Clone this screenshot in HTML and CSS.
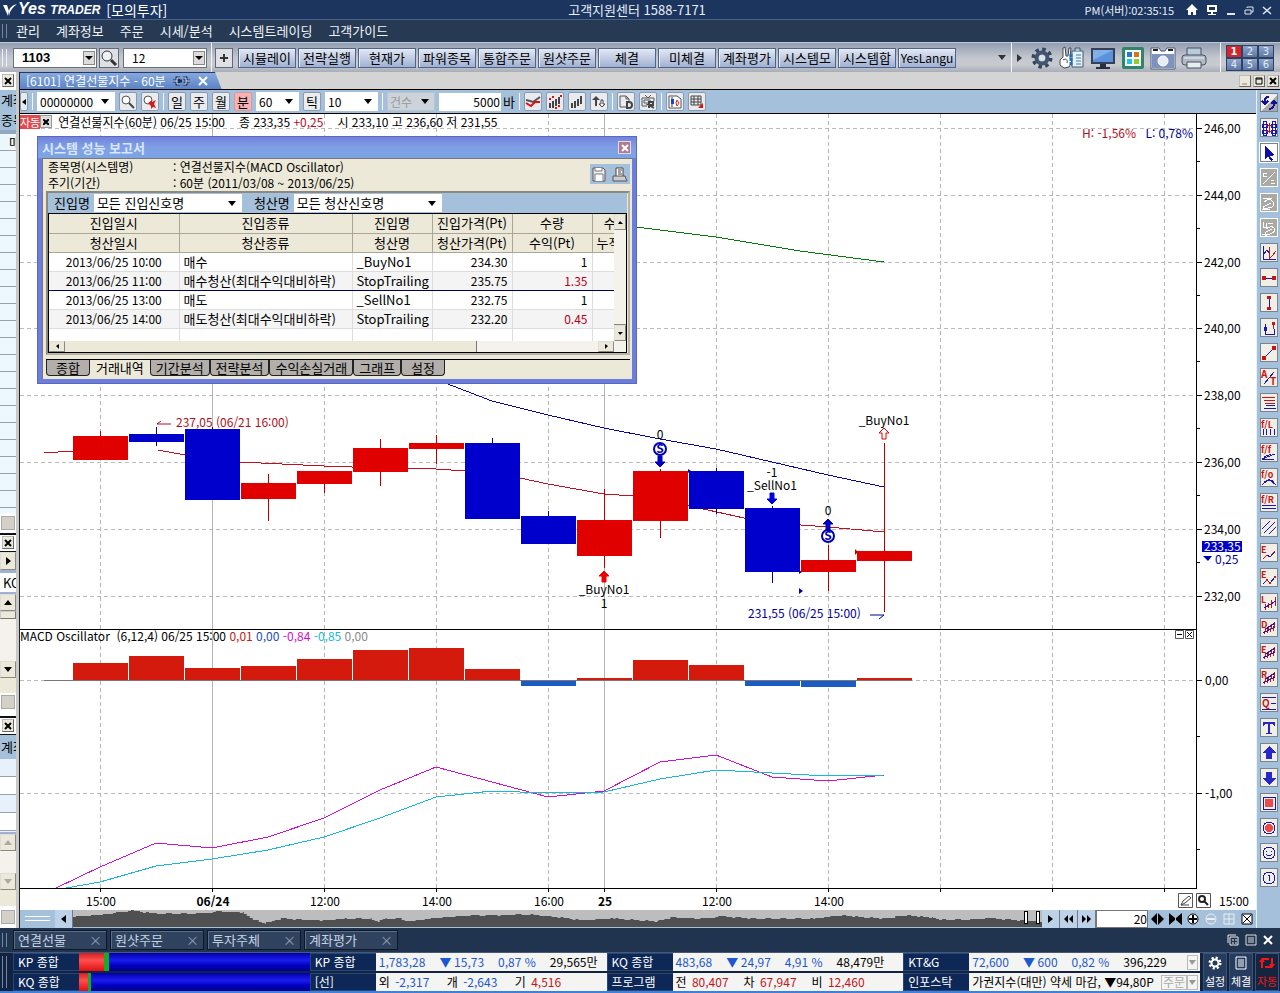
FILE: index.html
```
<!DOCTYPE html>
<html lang="ko">
<head>
    <meta charset="UTF-8">
    <meta name="viewport" content="width=device-width, initial-scale=1.0">
    <title>Yes TRADER [모의투자]</title>
    <link rel="stylesheet" href="styles.css">
</head>
<body>
    <!-- Title bar -->
    <header class="title-bar">
        <div class="brand">
            <svg class="brand-mark" width="16" height="16" viewBox="0 0 16 16"><path d="M1 3l4 0 2 6-1 5zM7 9C8 5 11 3 15 2 10 6 8 9 7 14z" fill="#fff"/></svg>
            <span class="logo">Yes <small>TRADER</small></span>
            <span class="mode">[모의투자]</span>
        </div>
        <span class="center">고객지원센터 1588-7171</span>
        <div class="sys">
            <span class="clock">PM(서버):02:35:15</span>
            <button aria-label="홈"><svg width="12" height="12" viewBox="0 0 12 12"><path d="M6 0l6 6h-2v5H7V8H5v3H2V6H0z" fill="#fff"/></svg></button>
            <button aria-label="화면"><svg width="12" height="12" viewBox="0 0 12 12"><path d="M1 1h10v7H1zM3 3v3h6V3zM5 8h2v2h3v1H2v-1h3z" fill="#fff" fill-rule="evenodd"/></svg></button>
            <button aria-label="최소화"><svg width="10" height="12" viewBox="0 0 10 12"><path d="M1 9h8v2H1z" fill="#dfe8f4"/></svg></button>
            <button aria-label="복원"><svg width="10" height="12" viewBox="0 0 10 12"><path d="M3 4V3h6v5H7M1 6h6v4H1z" fill="none" stroke="#dfe8f4"/></svg></button>
            <button aria-label="닫기"><svg width="10" height="12" viewBox="0 0 10 12"><path d="M1 3l8 7M9 3l-8 7" stroke="#dfe8f4" stroke-width="1.5"/></svg></button>
        </div>
    </header>

    <nav class="menu-bar">
        <i class="grip"></i>
        <a href="#">관리</a>
        <a href="#">계좌정보</a>
        <a href="#">주문</a>
        <a href="#">시세/분석</a>
        <a href="#">시스템트레이딩</a>
        <a href="#">고객가이드</a>
    </nav>

    <!-- Main toolbar -->
    <div class="toolbar">
        <i class="grip"></i>
        <select class="screen-no" aria-label="화면번호"><option>1103</option></select>
        <button class="square" aria-label="검색"><svg width="18" height="18" viewBox="0 0 18 18"><circle cx="7" cy="7" r="5" fill="#eef2f6" stroke="#333"/><path d="M11 11l5 5" stroke="#333" stroke-width="3"/></svg></button>
        <select class="screen-set" aria-label="화면세트"><option>12</option></select>
        <i class="split"></i>
        <button class="square plus" aria-label="추가"><svg width="10" height="10" viewBox="0 0 10 10"><path d="M5 1v8M1 5h8" stroke="#333" stroke-width="2"/></svg></button>
        <div class="quick">
            <button>시뮬레이</button>
            <button>전략실행</button>
            <button>현재가</button>
            <button>파워종목</button>
            <button>통합주문</button>
            <button>원샷주문</button>
            <button>체결</button>
            <button>미체결</button>
            <button>계좌평가</button>
            <button>시스템모</button>
            <button>시스템합</button>
            <button>YesLangu</button>
        </div>
        <div class="tools">
            <svg width="8" height="5" viewBox="0 0 8 5"><path d="M0 0h8L4 5z" fill="#333"/></svg>
            <i class="split"></i>
            <svg class="more" width="5" height="8" viewBox="0 0 5 8"><path d="M0 0l5 4-5 4z" fill="#333"/></svg>
            <button aria-label="설정"><svg width="24" height="24" viewBox="0 0 24 24"><circle cx="12" cy="12" r="8.5" fill="none" stroke="#34455e" stroke-width="4" stroke-dasharray="3.4 3.27"/><circle cx="12" cy="12" r="5.5" fill="#b9c4d2" stroke="#42546e" stroke-width="4"/><circle cx="12" cy="12" r="3" fill="#dde2ea"/></svg></button>
            <button aria-label="주문장"><svg width="26" height="24" viewBox="0 0 26 24"><path d="M4 2l2-1 1 9h2l1-8 2 0-1 10 2 4-3 5-5 1-4-3 0-5 3-3z" fill="#fff" stroke="#445"/><path d="M4 14c3-2 5 0 4 3" fill="none" stroke="#445"/><path d="M13 5h11v16H13z" fill="#e6f2fa" stroke="#3d5878"/><path d="M17 9h5M17 12h5M17 15h5M17 18h5" stroke="#4978a8"/><path d="M16 5V2h5v3" fill="#a8c6e0" stroke="#3d5878"/><path d="M12 8v12" stroke="#1674c6" stroke-width="3" stroke-dasharray="3 1"/></svg></button>
            <button aria-label="모니터"><svg width="26" height="24" viewBox="0 0 26 24"><path d="M1 2h24v16H1z" fill="#334058"/><path d="M3 4h20v12H3z" fill="#5c91dc"/><path d="M3 4h20L3 14z" fill="#83afe9"/><path d="M10 18h6v3h4v2H6v-2h4z" fill="#28303f"/></svg></button>
            <button aria-label="창배열"><svg width="24" height="24" viewBox="0 0 24 24"><rect x="1" y="1" width="22" height="22" rx="2" fill="#328469"/><path d="M4 4h16v16H4z" fill="#f4fff9"/><path d="M6 6h5v5H6z" fill="#2b75d0"/><path d="M13 6h5v5h-5z" fill="#df7018"/><path d="M6 13h5v5H6z" fill="#25c4da"/><path d="M13 13h5v5h-5z" fill="#95c92c"/></svg></button>
            <button aria-label="화면캡처"><svg width="26" height="24" viewBox="0 0 26 24"><path d="M1 2h8l2 3h4l2-3h8v21H1z" fill="#fff" stroke="#485a77"/><path d="M3 4h5M18 4h5" stroke="#222" stroke-width="2"/><path d="M2 8h22v14H2z" fill="#7f92bd"/><circle cx="13" cy="15" r="5" fill="#e7edf8" stroke="#fff"/></svg></button>
            <button aria-label="인쇄"><svg width="26" height="24" viewBox="0 0 26 24"><path d="M6 2h14v8H6z" fill="#b8cbd8" stroke="#445064"/><rect x="1" y="9" width="24" height="10" rx="3" fill="#b4bac4" stroke="#445064"/><path d="M3 12h20" stroke="#eef"/><path d="M6 16h14v6H6z" fill="#e9edf2" stroke="#445064"/></svg></button>
            <i class="split last"></i>
            <div class="pages">
                <button class="on">1</button><button>2</button><button>3</button>
                <button>4</button><button>5</button><button>6</button>
            </div>
        </div>
    </div>

    <main class="workspace">
        <!-- Docked panels, collapsed to a sliver -->
        <aside class="dock">
            <div class="dock-head"><button aria-label="닫기"><svg width="8" height="8" viewBox="0 0 8 8"><path d="M1 1l6 6M7 1L1 7" stroke="#000" stroke-width="2"/></svg></button></div>
            <div class="dock-label">계좌</div>
            <div class="dock-label">종목</div>
            <div class="dock-rows tall"><span>매</span></div>
            <div class="dock-corner"><i></i></div>
            <div class="dock-head line"><button aria-label="닫기"><svg width="8" height="8" viewBox="0 0 8 8"><path d="M1 1l6 6M7 1L1 7" stroke="#000" stroke-width="2"/></svg></button></div>
            <button class="dock-step" aria-label="다음"><svg width="5" height="8" viewBox="0 0 5 8"><path d="M0 0l5 4-5 4z"/></svg></button>
            <div class="dock-field">KO</div>
            <div class="dock-scroll first"><button aria-label="위로"><svg width="8" height="5" viewBox="0 0 8 5"><path d="M0 5h8L4 0z"/></svg></button><i></i><button aria-label="아래로"><svg width="8" height="5" viewBox="0 0 8 5"><path d="M0 0h8L4 5z"/></svg></button></div>
            <div class="dock-corner second"><i></i></div>
            <div class="dock-head line"><button aria-label="닫기"><svg width="8" height="8" viewBox="0 0 8 8"><path d="M1 1l6 6M7 1L1 7" stroke="#000" stroke-width="2"/></svg></button></div>
            <div class="dock-label high">계좌</div>
            <div class="dock-rows short"></div>
            <div class="dock-scroll off"><button aria-label="위로"><svg width="8" height="5" viewBox="0 0 8 5"><path d="M0 5h8L4 0z" fill="#aaa"/></svg></button><button aria-label="아래로"><svg width="8" height="5" viewBox="0 0 8 5"><path d="M0 0h8L4 5z" fill="#aaa"/></svg></button></div>
            <div class="dock-corner last"><i></i></div>
        </aside>

        <section class="window">
            <div class="window-tabs">
                <div class="window-tab">
                    <span>[6101] 연결선물지수 - 60분</span>
                    <svg width="18" height="10" viewBox="0 0 18 10"><path d="M0 5h4M7 2H4v6h3M4 5h5M10 2h3v6h-3M13 5h4" fill="none" stroke="#17305e" stroke-width="3"/><path d="M0 5h4M7 2H4v6h3M10 2h3v6h-3M13 5h4" fill="none" stroke="#e2ebf8"/></svg>
                    <button aria-label="탭 닫기"><svg width="10" height="10" viewBox="0 0 10 10"><path d="M1 1l8 8M9 1L1 9" stroke="#fff" stroke-width="2"/></svg></button>
                </div>
                <div class="window-ctl">
                    <button aria-label="최소화"><svg width="8" height="8" viewBox="0 0 8 8"><path d="M1 7h5" stroke="#888"/></svg></button>
                    <button aria-label="최대화"><svg width="8" height="8" viewBox="0 0 8 8"><path d="M1 1h6v6H1zM1 2h6" fill="none" stroke="#000"/></svg></button>
                    <button aria-label="닫기"><svg width="8" height="8" viewBox="0 0 8 8"><path d="M1 1l6 6M7 1L1 7" stroke="#000" stroke-width="2"/></svg></button>
                </div>
            </div>

            <div class="window-body">
                <div class="chart-side">
                    <div class="chart-bar">
                        <button class="tiny" aria-label="이전"><svg width="4" height="6" viewBox="0 0 4 6"><path d="M4 0v6L0 3z"/></svg></button>
                        <i class="split"></i>
                        <select class="code" aria-label="종목코드"><option>00000000</option></select>
                        <button aria-label="종목검색"><svg width="14" height="14" viewBox="0 0 14 14"><circle cx="5" cy="5" r="4" fill="#fff" stroke="#555"/><path d="M8 8l5 5" stroke="#444" stroke-width="2"/></svg></button>
                        <button aria-label="검색취소"><svg width="14" height="14" viewBox="0 0 14 14"><circle cx="5" cy="5" r="4" fill="#fff" stroke="#555"/><path d="M5 8l4-3v2l4-2-2 4 2 4-3-1-2 2V11z" fill="#d51a1a"/></svg></button>
                        <i class="split"></i>
                        <button>일</button>
                        <button>주</button>
                        <button>월</button>
                        <button class="on">분</button>
                        <select class="minutes" aria-label="분"><option>60</option></select>
                        <button>틱</button>
                        <select class="ticks" aria-label="틱"><option>10</option></select>
                        <i class="split"></i>
                        <select class="count" aria-label="건수" disabled><option>건수</option></select>
                        <label class="bars"><input type="text" value="5000"> 바</label>
                        <i class="split"></i>
                        <button aria-label="지표"><svg width="16" height="14" viewBox="0 0 16 14"><path d="M1 5l4 1 3 1 7-5" fill="none" stroke="#555" stroke-width="2"/><path d="M1 8l5 3 4-4 5 0" fill="none" stroke="#d11" stroke-width="2"/></svg></button>
                        <button aria-label="신호"><svg width="14" height="14" viewBox="0 0 14 14"><path d="M2 8v5M5 6v7M8 4v7M11 2v7" stroke="#444" stroke-width="2"/><path d="M1 4h2M4 2h2M7 13h2M10 11h2M12 1h2" stroke="#d11" stroke-width="2"/></svg></button>
                        <button aria-label="봉차트"><svg width="14" height="14" viewBox="0 0 14 14"><path d="M2 8v5M5 6v7M8 4v7M11 1v8" stroke="#444" stroke-width="2"/></svg></button>
                        <button aria-label="정렬"><svg width="14" height="14" viewBox="0 0 14 14"><path d="M4 1l4 4H5v6H3V5H0z" fill="#444"/><path d="M10 12L7 9h2V5h2v4h2z" fill="#fff" stroke="#444"/></svg></button>
                        <i class="split"></i>
                        <button aria-label="데이터"><svg width="14" height="14" viewBox="0 0 14 14"><path d="M7 12H1V1h6l3 3v2M7 1v3h3" fill="none" stroke="#555"/><path d="M8 7h2q3 0 3 3t-3 3H8z" fill="none" stroke="#444" stroke-width="2"/></svg></button>
                        <button aria-label="리플레이"><svg width="14" height="14" viewBox="0 0 14 14"><path d="M4 0l3 3 3-3M6 11H1V3h12v3M3 5h6v3H3z" fill="none" stroke="#555"/><path d="M8 13V7h4v3H8l5 3" fill="none" stroke="#444" stroke-width="2"/></svg></button>
                        <i class="split"></i>
                        <button aria-label="차트저장"><svg width="14" height="14" viewBox="0 0 14 14"><path d="M1 1h8l4 3v9H1z" fill="#fff" stroke="#555"/><path d="M4 2v10" stroke="#333"/><path d="M3 4h3v5H3z" fill="#1745d8"/><path d="M9 5l2 3-2 3-1-3z" fill="#fff" stroke="#d22"/></svg></button>
                        <button aria-label="표"><svg width="14" height="14" viewBox="0 0 14 14"><path d="M1 1h10v9H1zM1 4h10M1 7h10M4 1v9M8 1v9" fill="none" stroke="#444"/><path d="M13 8v5H8z" fill="#d11"/></svg></button>
                    </div>

                    <div class="chart-area">
                        <div class="quote">
                            <b class="auto">자동</b><button aria-label="닫기"><svg width="6" height="6" viewBox="0 0 6 6"><path d="M0 0l6 6M6 0L0 6" stroke="#000" stroke-width="2"/></svg></button>
                            <span class="name">연결선물지수(60분) 06/25 15:00</span>
                            <span>종 233,35 <em>+0,25</em></span>
                            <span class="ohl">시 233,10 고 236,60 저 231,55</span>
                        </div>
                        <svg class="chart" id="chart" viewBox="20 114 1236 796" role="img" aria-label="연결선물지수 60분 차트"></svg>

                        <!-- System performance report -->
                        <div class="report">
                            <div class="report-title">
                                <h2>시스템 성능 보고서</h2>
                                <button aria-label="닫기"><svg width="8" height="8" viewBox="0 0 8 8"><path d="M1 1l6 6M7 1L1 7" stroke="#fff" stroke-width="2"/></svg></button>
                            </div>
                            <div class="report-body">
                                <div class="report-info">
                                    <dl>
                                        <dt>종목명(시스템명)</dt><dd>: 연결선물지수(MACD Oscillator)</dd>
                                        <dt>주기(기간)</dt><dd>: 60분 (2011/03/08 ~ 2013/06/25)</dd>
                                    </dl>
                                    <div class="report-tools">
                                        <button aria-label="저장"><svg width="14" height="15" viewBox="0 0 14 15"><path d="M1 1h10l2 2v11H1z" fill="#eee" stroke="#555"/><path d="M3 1v3h7V1M3 14V7h8v7" fill="#fff" stroke="#777"/></svg></button>
                                        <button aria-label="인쇄"><svg width="16" height="15" viewBox="0 0 16 15"><path d="M4 9V1h7v8" fill="#fff" stroke="#444"/><path d="M6 3h4M6 5h3M6 7h4" stroke="#444"/><path d="M1 9h12l2 5H1z" fill="#ccc" stroke="#555"/></svg></button>
                                    </div>
                                </div>
                                <div class="report-panel">
                                    <div class="filters">
                                        <label for="entry">진입명</label>
                                        <select id="entry"><option>모든 진입신호명</option></select>
                                        <label for="exit">청산명</label>
                                        <select id="exit"><option>모든 청산신호명</option></select>
                                    </div>
                                    <div class="trades">
                                        <div class="trades-view">
                                            <table>
                                                <colgroup><col class="c-date"><col class="c-kind"><col class="c-num"><col class="c-num"><col class="c-num"><col class="c-num"></colgroup>
                                                <thead>
                                                    <tr><th>진입일시</th><th>진입종류</th><th>진입명</th><th>진입가격(Pt)</th><th>수량</th><th class="cut">&nbsp; 수</th></tr>
                                                    <tr><th>청산일시</th><th>청산종류</th><th>청산명</th><th>청산가격(Pt)</th><th>수익(Pt)</th><th class="cut">누적</th></tr>
                                                </thead>
                                                <tbody>
                                                    <tr><td>2013/06/25 10:00</td><td>매수</td><td>_BuyNo1</td><td>234.30</td><td>1</td><td></td></tr>
                                                    <tr class="exit"><td>2013/06/25 11:00</td><td>매수청산(최대수익대비하락)</td><td>StopTrailing</td><td>235.75</td><td class="gain">1.35</td><td></td></tr>
                                                    <tr><td>2013/06/25 13:00</td><td>매도</td><td>_SellNo1</td><td>232.75</td><td>1</td><td></td></tr>
                                                    <tr class="exit"><td>2013/06/25 14:00</td><td>매도청산(최대수익대비하락)</td><td>StopTrailing</td><td>232.20</td><td class="gain">0.45</td><td></td></tr>
                                                    <tr><td></td><td></td><td></td><td></td><td></td><td></td></tr>
                                                </tbody>
                                            </table>
                                        </div>
                                        <div class="v-scroll"><button aria-label="위로"><svg width="5" height="3" viewBox="0 0 5 3"><path d="M0 3h5L2 0z"/></svg></button><i></i><button aria-label="아래로"><svg width="5" height="3" viewBox="0 0 5 3"><path d="M0 0h5L2 3z"/></svg></button></div>
                                        <div class="h-scroll"><button aria-label="왼쪽"><svg width="3" height="5" viewBox="0 0 3 5"><path d="M3 0v5L0 2z"/></svg></button><i></i><button aria-label="오른쪽"><svg width="3" height="5" viewBox="0 0 3 5"><path d="M0 0v5l3-3z"/></svg></button></div>
                                    </div>
                                </div>
                                <div class="report-tabs">
                                    <button>종합</button><button class="on">거래내역</button><button>기간분석</button><button>전략분석</button><button>수익손실거래</button><button>그래프</button><button>설정</button>
                                </div>
                            </div>
                        </div>
                    </div>

                    <!-- Range scroller -->
                    <div class="range">
                        <span class="range-grip"><i></i></span>
                        <button aria-label="처음"><svg width="5" height="8" viewBox="0 0 5 8"><path d="M5 0v8L0 4z"/></svg></button>
                        <svg class="minimap" id="minimap" viewBox="72 910 970 17" preserveAspectRatio="none"></svg>
                        <button aria-label="재생"><svg width="5" height="8" viewBox="0 0 5 8"><path d="M0 0l5 4-5 4z"/></svg></button>
                        <button aria-label="뒤로"><svg width="9" height="8" viewBox="0 0 9 8"><path d="M4 0v8L0 4zM9 0v8L5 4z"/></svg></button>
                        <button aria-label="앞으로"><svg width="9" height="8" viewBox="0 0 9 8"><path d="M0 0v8l4-4zM5 0v8l4-4z"/></svg></button>
                        <input type="text" value="20" aria-label="표시 개수">
                        <button class="flat" aria-label="넓게"><svg width="13" height="12" viewBox="0 0 13 12"><path d="M6 0v12L0 6zM7 0v12l6-6z"/></svg></button>
                        <button class="flat" aria-label="좁게"><svg width="13" height="12" viewBox="0 0 13 12"><path d="M0 0v12l6-5V5zM13 0v12L7 7V5z"/></svg></button>
                        <button class="flat" aria-label="확대"><svg width="12" height="12" viewBox="0 0 12 12"><circle cx="6" cy="6" r="5" fill="#fff" stroke="#000"/><path d="M6 2v8M2 6h8" stroke="#000" stroke-width="2"/></svg></button>
                        <button class="flat" aria-label="축소"><svg width="12" height="12" viewBox="0 0 12 12"><circle cx="6" cy="6" r="5" fill="none" stroke="#eee"/><path d="M2 6h8" stroke="#eee" stroke-width="2"/></svg></button>
                        <button class="flat" aria-label="전체"><svg width="12" height="12" viewBox="0 0 12 12"><path d="M1 1h10v10H1zM1 6h10M6 1v10" fill="none" stroke="#eee"/></svg></button>
                        <button class="flat" aria-label="초기화"><svg width="12" height="12" viewBox="0 0 12 12"><path d="M1 1h10v10H1z" fill="#fff" stroke="#000"/><path d="M2 2l8 8M10 2l-8 8" stroke="#000"/></svg></button>
                    </div>
                </div>
                <div class="draw-tools" id="draw-tools"></div>
            </div>
        </section>
    </main>

    <!-- Opened screens -->
    <nav class="task-bar">
        <i class="grip"></i>
        <button>연결선물<span>×</span></button>
        <button>원샷주문<span>×</span></button>
        <button>투자주체<span>×</span></button>
        <button>계좌평가<span>×</span></button>
        <div class="task-ctl">
            <svg width="12" height="12" viewBox="0 0 12 12"><path d="M1 9V1h8M3 3h8v8H3zM5 6h2M8 6h2M5 9h2M8 9h2" fill="none" stroke="#eee"/></svg>
            <svg width="12" height="12" viewBox="0 0 12 12"><path d="M1 1h10v10H1zM3 4h6M3 6h6M3 8h6" fill="none" stroke="#ddd"/></svg>
            <svg width="10" height="12" viewBox="0 0 10 12"><path d="M1 2l8 8M9 2l-8 8" stroke="#fff" stroke-width="2"/></svg>
        </div>
    </nav>

    <footer class="status">
        <i class="grip"></i>
        <div class="ticker">
            <b>KP 종합</b>
            <div class="meter"><i class="up" style="width: 11%"></i><i class="flat-part" style="width: 2%"></i></div>
            <b>KP 종합</b>
            <div class="cell down"><span>1,783,28</span><span>▼ 15,73</span><span>0,87 %</span><span class="vol">29,565만</span></div>
            <b>KQ 종합</b>
            <div class="cell down"><span>483,68</span><span>▼ 24,97</span><span>4,91 %</span><span class="vol">48,479만</span></div>
            <b>KT&amp;G</b>
            <div class="cell down"><span>72,600</span><span>▼ 600</span><span>0,82 %</span><span class="vol">396,229</span><button class="drop" aria-label="종목 선택"><svg width="7" height="5" viewBox="0 0 7 5"><path d="M0 0h7L3 5z" fill="#999"/></svg></button></div>

            <b>KQ 종합</b>
            <div class="meter"><i class="up" style="width: 4%"></i><i class="flat-part" style="width: 1%"></i></div>
            <b>[선]</b>
            <div class="cell flows"><span>외 <em class="minus">-2,317</em></span><span>개 <em class="minus">-2,643</em></span><span>기 <em>4,516</em></span></div>
            <b>프로그램</b>
            <div class="cell flows"><span>전 <em>80,407</em></span><span>차 <em>67,947</em></span><span>비 <em>12,460</em></span></div>
            <b>인포스탁</b>
            <div class="cell news"><span>가권지수(대만) 약세 마감, ▼94,80P</span><button class="order">주문</button><button class="drop" aria-label="뉴스 선택"><svg width="7" height="5" viewBox="0 0 7 5"><path d="M0 0h7L3 5z" fill="#999"/></svg></button></div>
        </div>
        <div class="status-buttons">
            <button><svg width="14" height="14" viewBox="0 0 14 14"><circle cx="7" cy="7" r="5" fill="none" stroke="#fff" stroke-width="3" stroke-dasharray="2 1.93"/><circle cx="7" cy="7" r="3.5" fill="none" stroke="#fff" stroke-width="2"/></svg>설정</button>
            <button><svg width="14" height="14" viewBox="0 0 14 14"><path d="M2 1h10v12H2zM4 4h6M4 6h6M4 8h6M4 10h6" fill="none" stroke="#fff"/></svg>체결</button>
            <button class="auto-btn"><svg width="16" height="14" viewBox="0 0 16 14"><path d="M3 12V4M3 3h7M13 2v8M13 11H6" fill="none" stroke="#f01818" stroke-width="2"/><path d="M0 6l3-4 3 4zM10 8l3 4 3-4z" fill="#f01818"/></svg>자동</button>
        </div>
    </footer>

    <script src="chart.js"></script>
</body>
</html>
```
FILE: styles.css
```
* {
    box-sizing: border-box;
}

body {
    margin: 0;
    min-height: 100vh;
    display: flex;
    flex-direction: column;
    background: #20344f;
    font-family: "Noto Sans CJK KR", sans-serif;
    font-size: 13px;
    line-height: 16px;
    color: #000;
}

button, select, input {
    font: inherit;
    color: inherit;
    margin: 0;
    padding: 0;
    border-radius: 0;
}

button {
    display: flex;
    align-items: center;
    justify-content: center;
    border: none;
    background: none;
    white-space: nowrap;
    overflow: hidden;
}

svg {
    display: block;
    flex: none;
}

em {
    font-style: normal;
    color: #b80a1c;
}

select {
    appearance: none;
    border: 1px solid #fff;
    background: #fff url("data:image/svg+xml,%3Csvg xmlns='http://www.w3.org/2000/svg' width='8' height='5'%3E%3Cpath d='M0 0h8L4 5z'/%3E%3C/svg%3E") no-repeat right 5px center;
    padding: 0 2px;
    line-height: 16px;
}

.grip {
    flex: none;
    width: 5px;
    height: 14px;
    margin-left: 2px;
    border: solid #7287a8;
    border-width: 0 1px;
}

.split {
    flex: none;
    width: 1px;
    align-self: stretch;
    background: #f4f6f8;
}

/* Title and menu */
.title-bar {
    display: grid;
    grid-template-columns: 1fr auto 1fr;
    align-items: center;
    height: 20px;
    padding: 0 8px 0 2px;
    background: #1b355e;
    border-bottom: 1px solid #4a6287;
    color: #e8eef6;
}

.brand {
    display: flex;
    align-items: center;
}

.logo {
    font: italic bold 16px/18px "Liberation Sans", sans-serif;
    color: #fff;
}

.logo small {
    font-size: 12px;
}

.mode {
    margin-left: 6px;
    font-size: 14px;
    color: #fff;
}

.sys {
    display: flex;
    justify-content: flex-end;
    gap: 8px;
}

.clock {
    font-size: 11px;
    margin-right: 4px;
}

.menu-bar {
    display: flex;
    align-items: center;
    height: 22px;
    gap: 16px;
    background: #263a54;
}

.menu-bar .grip {
    margin-right: -7px;
}

.menu-bar a {
    color: #f0f4f8;
    text-decoration: none;
}

/* Main toolbar */
.toolbar {
    display: flex;
    align-items: center;
    height: 30px;
    border-top: 1px solid #b9c9da;
    background: linear-gradient(#929eb0, #c3c6ce 50%, #c9cbd1 75%, #a8adb8);
}

.toolbar .grip {
    height: 18px;
    border-color: #edf1f5;
}

.toolbar select {
    height: 20px;
    border: 1px solid #68717e;
    padding-left: 8px;
    background-color: #fff;
    background-image: url("data:image/svg+xml,%3Csvg xmlns='http://www.w3.org/2000/svg' width='12' height='14'%3E%3Cpath d='M0 0h12v14H0z' fill='%23888'/%3E%3Cpath d='M1 1h10v12H1z' fill='%23dcdcdc'/%3E%3Cpath d='M2 5h8L6 9z'/%3E%3C/svg%3E");
    background-position: right 1px center;
}

.toolbar .screen-no {
    width: 84px;
    margin: 0 2px 0 6px;
    font-weight: bold;
    font-family: "Liberation Sans", sans-serif;
}

.toolbar .screen-set {
    width: 84px;
    margin: 0 4px;
    font-size: 12px;
}

.square {
    width: 20px;
    height: 20px;
    border: 1px solid #667;
    background: #dde0e5;
}

.plus {
    width: 18px;
    margin: 0 5px 0 3px;
}

.quick {
    display: flex;
    gap: 2px;
}

.quick button {
    width: 58px;
    height: 20px;
    border: 1px solid #4e648c;
    box-shadow: inset 1px 1px #e8eefa;
    background: linear-gradient(#e2e7f3, #bcc8e0 60%, #9fb0d2);
}

.quick button:last-child {
    font-size: 12px;
}

.tools {
    flex: 1;
    display: flex;
    align-items: center;
    justify-content: flex-end;
    align-self: stretch;
    gap: 5px;
    padding-right: 6px;
}

.tools .more {
    margin-right: 3px;
}

.tools .last {
    margin-left: 8px;
}

.pages {
    display: grid;
    grid-template-columns: repeat(3, 16px);
    grid-auto-rows: 13px;
}

.pages button {
    border: 1px solid #30415f;
    background: linear-gradient(#8ea6cc, #5c77a6);
    color: #e4ebf5;
    font: 10px/11px "DejaVu Sans", sans-serif;
}

.pages .on {
    background: #d6242b;
    color: #fff;
    font-weight: bold;
}

/* Workspace */
.workspace {
    flex: 1;
    display: flex;
}

.dock {
    flex: none;
    display: flex;
    flex-direction: column;
    width: 20px;
    overflow: hidden;
    background: #fff;
    border-right: 1px solid #222;
    box-shadow: inset -3px 0 #c8c8c8;
    padding-right: 3px;
    white-space: nowrap;
}

.dock-head {
    height: 18px;
    padding: 2px;
}

.dock-head.line {
    height: 19px;
    border: solid #111;
    border-width: 2px 0 1px;
    padding: 1px 2px;
}

.dock-head button {
    width: 12px;
    height: 13px;
    background: #ece9d8;
    border: 1px outset #bbb;
}

.dock-label {
    height: 20px;
    padding: 2px 1px;
    overflow: hidden;
    background: #a5c0da;
}

.dock-label.high {
    height: 24px;
    padding-top: 4px;
}

.dock-rows {
    background: repeating-linear-gradient(#ecf7fe 0 16px, #98a2ac 16px 17px);
}

.dock-rows.tall {
    height: 383px;
    padding: 0 0 0 9px;
    overflow: hidden;
    border-top: 4px solid #8fa9c2;
}

.dock-rows.short {
    height: 73px;
    background: repeating-linear-gradient(#e6f1fc 0 17px, #98a2ac 17px 18px, #fff 18px 35px, #98a2ac 35px 36px);
}

.dock-corner {
    height: 20px;
    padding: 3px 1px;
}

.dock-corner i {
    display: block;
    height: 14px;
    width: 14px;
    background: #d4d0c8;
    border: 1px solid #aaa;
}

.dock-corner.second {
    height: 38px;
    padding-top: 17px;
    background: linear-gradient(#ece9d8 15px, #fff 15px);
}

.dock-corner.last {
    flex: 1;
    padding-top: 20px;
    background: linear-gradient(#ece9d8 16px, #fff 16px);
}

.dock-step {
    height: 18px;
    background: #ece9d8;
    border: 1px outset #ddd;
}

.dock-field {
    height: 24px;
    padding: 2px 3px;
    overflow: hidden;
    border: solid #9fb3d0;
    border-width: 3px 0 2px;
}

.dock-scroll {
    display: flex;
    flex-direction: column;
    justify-content: space-between;
    background: #f4f2ea;
}

.dock-scroll button {
    height: 17px;
    border: 1px outset #ddd;
    background: #ece9d8;
}

.dock-scroll.first {
    height: 84px;
}

.dock-scroll.first i {
    height: 8px;
    margin-bottom: auto;
    background: #ece9d8;
    border: 1px outset #ccc;
}

.dock-scroll.off {
    height: 58px;
    border-top: 2px solid #9fb3d0;
}

.window {
    flex: 1;
    min-width: 0;
    display: flex;
    flex-direction: column;
}

.window-tabs {
    display: flex;
    align-items: flex-end;
    justify-content: space-between;
    height: 18px;
    background: #d4d4d4;
    border-bottom: 1px solid #000;
}

.window-tab {
    display: flex;
    align-items: center;
    gap: 7px;
    height: 17px;
    padding: 0 14px 0 6px;
    color: #fff;
    background: linear-gradient(#86a8de, #5b83c6);
    border-top: 1px solid #223a6a;
    clip-path: polygon(0 0, 195px 0, 100% 100%, 0 100%);
}

.window-tab span {
    font-size: 12px;
}

.window-ctl {
    display: flex;
    align-self: center;
    gap: 2px;
    padding-right: 1px;
}

.window-ctl button {
    width: 12px;
    height: 12px;
    background: #ece9d8;
    border: 1px outset #bbb;
}

.window-body {
    flex: 1;
    display: flex;
}

.chart-side {
    flex: 1;
    min-width: 0;
    display: flex;
    flex-direction: column;
    background: #fff;
}

.chart-bar {
    display: flex;
    align-items: center;
    gap: 4px;
    height: 24px;
    background: #a5c0da;
    border-bottom: 1px solid #000;
}

.chart-bar .split {
    margin: 3px 0;
}

.chart-bar button {
    width: 18px;
    height: 19px;
    border: 1px solid #8c9aab;
    border-radius: 2px;
    background: #e9ebee;
}

.chart-bar .tiny {
    width: 8px;
}

.chart-bar .on {
    background: #f5b3b3;
    border-color: #d99;
}

.chart-bar select {
    height: 19px;
    font-size: 12px;
}

.code {
    width: 78px;
}

.minutes {
    width: 43px;
}

.ticks {
    width: 53px;
}

.chart-bar .count {
    width: 48px;
    background-color: #cdd3da;
    border-color: #bcc4cd;
    color: #999;
    opacity: 1;
}

.bars {
    display: flex;
    align-items: center;
    gap: 2px;
}

.bars input {
    width: 62px;
    height: 18px;
    border: none;
    padding: 0 1px;
    text-align: right;
    font-size: 12px;
}

.chart-area {
    position: relative;
}

.chart {
    width: 100%;
    height: auto;
}

.chart text {
    font-size: 12px;
}

.quote {
    position: absolute;
    top: 0;
    left: 0;
    display: flex;
    align-items: center;
    height: 15px;
    font-size: 12px;
    white-space: nowrap;
}

.quote .auto {
    background: #e2494c;
    color: #fff;
    font-size: 11px;
    font-weight: normal;
    line-height: 14px;
}

.quote button {
    width: 12px;
    height: 13px;
    background: #ddd;
    border: 1px solid #999;
}

.name {
    margin: 0 14px 0 6px;
}

.ohl {
    margin-left: 14px;
}

/* Report dialog */
.report {
    position: absolute;
    left: 17px;
    top: 22px;
    width: 600px;
    padding: 0 4px 4px;
    background: #6c7ddc;
    border: 1px solid #5a68c4;
}

.report-title {
    display: flex;
    align-items: center;
    justify-content: space-between;
    height: 21px;
    margin: 0 -4px;
    padding: 0 5px 0 4px;
    background: linear-gradient(#7184dc, #809fe6 50%, #7ba4e4);
}

.report-title h2 {
    margin: 0;
    font-size: 13px;
    color: #dbe7fb;
}

.report-title button {
    width: 13px;
    height: 13px;
    border: 1px solid #e8d8e8;
    background: #b07a92;
}

.report-body {
    background: #ece9d8;
    border: solid #777;
    border-width: 1px 0 0 1px;
    padding: 0 2px 3px 3px;
}

.report-info {
    display: flex;
    justify-content: space-between;
    align-items: flex-start;
    height: 32px;
    margin-left: 2px;
}

.report-info dl {
    display: grid;
    grid-template-columns: 125px auto;
    margin: 0;
    font-size: 12px;
}

.report-info dd {
    margin: 0;
}

.report-tools {
    display: flex;
    gap: 6px;
    height: 20px;
    margin-top: 5px;
    padding: 0 2px;
    background: #a5c0da;
}

.report-panel {
    border: 2px solid;
    border-color: #8c8a80 #b8b4a8 #b8b4a8 #8c8a80;
    padding-right: 1px;
}

.filters {
    display: flex;
    align-items: center;
    height: 20px;
    background: #a5c0da;
}

.filters label {
    padding: 0 4px 0 6px;
}

.filters select {
    width: 148px;
    height: 18px;
    margin-right: 6px;
}

.trades {
    display: grid;
    grid-template-columns: 1fr 12px;
    border: 1px solid #000;
    background: #f4f2ea;
}

.trades-view {
    overflow: hidden;
    height: 127px;
    background: #fff;
}

.trades table {
    table-layout: fixed;
    width: 623px;
    border-collapse: collapse;
}

.c-date {
    width: 130px;
}

.c-kind {
    width: 173px;
}

.c-num {
    width: 80px;
}

.trades tr {
    height: 19px;
}

.trades th, .trades td {
    padding: 0 4px;
    line-height: 16px;
    white-space: nowrap;
    border-right: 1px solid #ddd;
    border-bottom: 1px solid #ddd;
    overflow: hidden;
}

.trades th {
    font-weight: normal;
    background: #ece9d8;
    border-color: #aaa79a;
}

.trades th.cut {
    text-align: left;
}

.trades th, .trades td:first-child {
    text-align: center;
}

.trades td:nth-child(4), .trades td:nth-child(5) {
    text-align: right;
}

.trades td:first-child, .trades td:nth-child(n+4) {
    font-size: 12px;
}

.trades .exit {
    background: #f4f4f4;
}

.trades tr.exit:nth-child(2) td {
    border-bottom-color: #00004c;
}

.gain {
    color: #b8001c;
}

.v-scroll, .h-scroll {
    display: flex;
}

.v-scroll {
    flex-direction: column;
    justify-content: space-between;
}

.v-scroll i {
    height: 6px;
    margin-top: auto;
    border-bottom: 1px solid #888;
}

.h-scroll {
    height: 11px;
    justify-content: space-between;
}

.h-scroll i {
    flex: none;
    width: 412px;
    margin-right: auto;
    background: #ece9d8;
    border-right: 1px solid #777;
}

.v-scroll button, .h-scroll button {
    width: 12px;
    height: 16px;
    background: #ece9d8;
    border: 1px outset #ddd;
}

.h-scroll button {
    width: 16px;
    height: 11px;
}

.report-tabs {
    display: flex;
    margin-top: 4px;
    border-top: 1px solid #000;
}

.report-tabs button {
    height: 16px;
    padding: 0 9px;
    border: 1px solid #222;
    border-top: none;
    border-radius: 0 0 4px 4px;
    background: #b2aeaa;
    line-height: 12px;
}

.report-tabs button:nth-child(n+2):nth-child(-n+6) {
    padding: 0 5px;
}

.report-tabs .on {
    background: #ece9d8;
    border-color: transparent;
}

/* Range scroller */
.range {
    flex: 1;
    display: flex;
    min-height: 17px;
    background: #a5c0da;
}

.range-grip {
    flex: none;
    width: 35px;
    padding: 6px 5px;
}

.range-grip i {
    display: block;
    height: 5px;
    border: solid #fff;
    border-width: 1px 0;
}

.range button {
    flex: none;
    width: 18px;
    border-right: 1px solid #778;
    background: #bcd2e8;
}

.range .flat {
    border: none;
    background: none;
}

.minimap {
    flex: 1;
    min-width: 0;
    height: 17px;
}

.range input {
    width: 52px;
    border: 1px solid #777;
    text-align: right;
    font-size: 12px;
}

/* Drawing tools */
.draw-tools {
    flex: none;
    display: flex;
    flex-direction: column;
    gap: 6px;
    width: 24px;
    padding: 3px 2px 0 3px;
    background: #a5c0da;
    border-left: 1px solid #e8f0f8;
}

.draw-tools button {
    width: 18px;
    height: 19px;
    border: 1px solid #77838f;
    background: #f1eee6;
}

.draw-tools svg {
    shape-rendering: crispEdges;
}

.draw-tools .active {
    background: #fff;
    outline: 1px solid #fff;
}

.draw-tools .off {
    background: #aaa9a4;
    border-color: #fff;
}

/* Task bar and status */
.task-bar {
    display: flex;
    align-items: center;
    height: 24px;
    background: #20344f;
    color: #c5d2e4;
}

.task-bar .grip {
    margin-right: 6px;
}

.task-bar button {
    width: 94px;
    height: 20px;
    margin-right: 3px;
    padding: 0 4px;
    justify-content: space-between;
    border: 1px solid #0c1828;
    box-shadow: inset 1px 1px #5b6d88;
    background: #2f435f;
}

.task-bar span {
    color: #8fa0ba;
}

.task-ctl {
    display: flex;
    gap: 6px;
    margin-left: auto;
    padding-right: 7px;
}

.status {
    display: flex;
    align-items: center;
    height: 42px;
    background: #12233f;
    border-top: 1px solid #45597a;
    border-bottom: 3px solid #3c82dc;
    color: #fff;
    font-size: 12px;
}

.status > .grip {
    height: 32px;
    margin-right: 6px;
}

.ticker {
    flex: 1;
    min-width: 0;
    display: grid;
    grid-template-columns: repeat(4, 66px minmax(0, 1fr));
    row-gap: 2px;
}

.ticker b {
    height: 18px;
    padding: 0 4px;
    font-weight: normal;
    background: #0d2757;
    border: 1px solid #2c4674;
    border-width: 1px 0 1px 1px;
    overflow: hidden;
}

.meter {
    display: flex;
    background: linear-gradient(#0000a8, #1c1cf0 40%, #0000c0 70%, #000088);
}

.up {
    background: linear-gradient(#d02020, #ff5050 40%, #e01010);
}

.flat-part {
    background: #10b020;
}

.cell {
    display: flex;
    align-items: center;
    gap: 14px;
    padding-left: 3px;
    background: #f4f4f2;
    color: #000;
    white-space: nowrap;
    overflow: hidden;
}

.flows span {
    width: 54px;
}

.flows em {
    margin-left: 2px;
    color: #c41420;
}

.down, .flows .minus {
    color: #1c58d0;
}

.vol {
    color: #000;
}

.drop {
    flex: none;
    width: 11px;
    height: 15px;
    margin: 0 2px 0 auto;
    border: 1px solid #bbb;
}

.news {
    gap: 0;
}

.news span {
    flex: 1;
    overflow: hidden;
}

.order {
    flex: none;
    width: 26px;
    height: 15px;
    border: 1px solid #bbb;
    color: #aaa;
}

.status-buttons {
    display: grid;
    grid-template-columns: repeat(3, 24px);
    gap: 2px;
    padding: 0 1px 0 3px;
}

.status-buttons button {
    height: 38px;
    flex-direction: column;
    justify-content: space-around;
    background: #263c5f;
    border: 1px solid #3d5275;
    font-size: 11px;
}

.status-buttons .auto-btn {
    color: #f01818;
    background: #16253f;
}
```
FILE: chart.js
```
const chart = document.getElementById('chart');
const RED = '#e00000';
const BLUE = '#0000cc';
let out = '';

function line(x1, y1, x2, y2, color, dash) {
    out += `<path d="M${x1} ${y1}L${x2} ${y2}" stroke="${color}" fill="none" shape-rendering="crispEdges"${dash ? ' stroke-dasharray="4 3"' : ''}/>`;
}

function rect(x, y, w, h, color) {
    out += `<rect x="${x}" y="${y}" width="${w}" height="${h}" fill="${color}"/>`;
}

function text(x, y, value, color = '#000', anchor = 'start', extra = '') {
    out += `<text x="${x}" y="${y}" fill="${color}" text-anchor="${anchor}" ${extra}>${value}</text>`;
}

function curve(points, color) {
    out += `<polyline points="${points}" fill="none" stroke="${color}" shape-rendering="crispEdges"/>`;
}

// Grid and price axis
for (let i = 0; i < 8; i++) {
    const y = Math.round(128 + i * 66.8) + 0.5;
    line(20, y, 1196, y, '#bbb', true);
    line(1196, y, 1202, y, '#000');
    if (i < 7) line(1196, y + 33, 1200, y + 33, '#000');
    text(1204, y + 4, `${246 - i * 2},00`);
}
[[680.5, '0,00'], [793.5, '-1,00']].forEach(([y, label]) => {
    line(20, y, 1196, y, '#bbb', true);
    line(1196, y, 1202, y, '#000');
    line(1196, y + 56, 1200, y + 56, '#000');
    text(1205, y + 4, label);
});

// Time axis
[[100, '15:00'], [212, '06/24', 1], [324, '12:00'], [436, '14:00'], [548, '16:00'], [604, '25', 1],
    [716, '12:00'], [828, '14:00'], [940, ''], [1052, ''], [1164, '']].forEach(([x, label, day]) => {
    line(x + 0.5, 114, x + 0.5, 888, '#b4b4b4', !day);
    line(x + 0.5, 888, x + 0.5, 892, '#000');
    text(x + 1, 906, label, '#000', 'middle', day ? 'font-weight="bold"' : '');
});
text(1219, 906, '15:00');

// Moving averages
curve('44,453 73,451 128,450 158,450 185,455 240,462 324,466 380,468 436,469 465,471 520,478 548,484 604,494 633,496 690,506 744,518 801,525 828,527 884,532', '#c01020');
curve('440,381 492,401 548,415 604,428 660,439 716,449 772,462 828,475 884,487', '#0808a0');
curve('620,224 636,227 716,237 800,251 884,262', '#087808');

// Candles: center, body top, body bottom, high, low, color
[
    [100, 436, 460, 431, 460, RED], [156, 434, 442, 427, 446, BLUE], [212, 429, 500, 427, 500, BLUE],
    [268, 483, 499, 474, 521, RED], [324, 471, 484, 471, 493, RED], [380, 448, 472, 439, 486, RED],
    [436, 443, 449, 435, 464, RED], [492, 443, 519, 438, 519, BLUE], [548, 516, 544, 511, 544, BLUE],
    [604, 520, 556, 489, 568, RED], [660, 471, 521, 469, 538, RED], [716, 471, 509, 468, 514, BLUE],
    [772, 508, 572, 506, 583, BLUE], [828, 560, 572, 545, 591, RED], [884, 551, 561, 443, 612, RED]
].forEach(([x, top, bottom, high, low, color]) => {
    line(x + 0.5, high, x + 0.5, low, color === RED ? '#b80000' : '#00008c');
    rect(x - 27, top, 55, bottom - top, color);
});

// MACD oscillator
[[100, 663], [156, 656], [212, 668], [268, 666], [324, 659], [380, 650], [436, 648], [492, 669], [548, 686],
    [604, 678], [660, 660], [716, 665], [772, 686], [828, 687], [884, 678]].forEach(([x, y]) => {
    if (y < 681) rect(x - 27, y, 55, 681 - y, '#d41a0c');
    else rect(x - 27, 681, 55, y - 681, '#1a5cc4');
});
line(44, 680.5, 912, 680.5, '#777');
curve('56,888 100,867 156,843 212,848 268,837 324,818 380,790 436,767 492,782 548,797 604,791 660,762 716,755 772,777 828,781 884,775', '#d010d0');
curve('66,888 100,882 156,866 212,859 268,850 324,837 380,818 436,797 492,791 548,793 604,792 660,779 716,770 772,773 828,776 884,775', '#18b8d8');

// Frame
line(20, 629.5, 1196, 629.5, '#000');
line(20, 888.5, 1197, 888.5, '#000');
line(1196.5, 114, 1196.5, 888, '#000');

// Signals
function arrow(x, y, dir, color, fill = color) {
    out += `<path d="M${x} ${y}l5 ${5 * dir}h-3v${6 * dir}h-4v${-6 * dir}h-3z" fill="${fill}" stroke="${color}"/>`;
}

function stop(x, y) {
    out += `<circle cx="${x}" cy="${y}" r="6" fill="#fff" stroke="#0000b4" stroke-width="2"/>`;
    text(x, y + 4, 'S', '#0000b4', 'middle', 'font-weight="bold"');
}

arrow(604, 571, 1, '#f00000');
text(604, 594, '_BuyNo1', '#000', 'middle');
text(604, 608, '1', '#000', 'middle');
arrow(660, 467, -1, '#0000c0');
stop(660, 449);
text(660, 439, '0', '#000', 'middle');
text(772, 477, '-1', '#000', 'middle');
text(772, 490, '_SellNo1', '#000', 'middle');
arrow(772, 504, -1, '#0000e0');
arrow(828, 519, 1, '#0000c0');
stop(828, 536);
text(828, 515, '0', '#000', 'middle');
text(884, 425, '_BuyNo1', '#000', 'middle');
arrow(884, 428, 1, '#e00000', '#fff');
out += '<path d="M799 588l4 3-4 3zM799 570l3 2-3 2zM688 469l3 2-3 2z" fill="#0000a0"/><path d="M855 549l3 3-3 3z" fill="#c00"/>';
out += '<path d="M171 424h-14l4-3" fill="none" stroke="#b01020"/><path d="M870 615h14l-5 4" fill="none" stroke="#0000a0"/>';
text(176, 427, '237,05 (06/21 16:00)', '#b01020');
text(748, 618, '231,55 (06/25 15:00)', '#0000a0');
text(1082, 138, 'H: -1,56%', '#b01020');
text(1193, 138, 'L: 0,78%', '#0000a0', 'end');
rect(1202, 541, 40, 11, '#0000cc');
text(1204, 551, '233,35', '#fff');
out += '<path d="M1203 556h9l-4 5z" fill="#0000b0"/>';
text(1215, 564, '0,25', '#0000a0');

out += `<text x="20" y="641">MACD Oscillator&#160; (6,12,4) 06/25 15:00 <tspan fill="#c02010">0,01</tspan> <tspan fill="#1a4cc4">0,00</tspan> <tspan fill="#d010d0">-0,84</tspan> <tspan fill="#18b8d8">-0,85</tspan> <tspan fill="#888">0,00</tspan></text>`;
out += '<path d="M1175.500 630.500h8v8h-8zM1185.500 630.500h8v8h-8z" fill="#fff" stroke="#555"/><path d="M1177 634.500h5M1187 632l5 5M1192 632l-5 5" stroke="#000"/>';
out += '<path d="M1178.500 893.500h14v14h-14zM1196.500 893.500h14v14h-14z" fill="#fff" stroke="#555"/><path d="M1181 905l2-4 6-5 2 2-6 5zM1181 905h8" fill="none" stroke="#444"/><circle cx="1202" cy="899" r="3" fill="none" stroke="#222" stroke-width="2"/><path d="M1204 901l4 4" stroke="#222" stroke-width="2"/>';
chart.innerHTML = out;

// Overview of the whole series
const overview = [[72, 916], [100, 914], [130, 910], [150, 913], [200, 913], [215, 911], [240, 912], [252, 919], [262, 923],
    [280, 918], [320, 920], [343, 918], [368, 918], [376, 921], [383, 918], [398, 918], [403, 921], [440, 917], [470, 915],
    [530, 914], [560, 917], [580, 920], [612, 918], [655, 921], [670, 917], [700, 918], [720, 916], [750, 918], [812, 918],
    [840, 915], [880, 918], [905, 915], [930, 917], [940, 919], [970, 919], [990, 918], [1024, 920], [1042, 922]];
let area = 'M72 927';
for (let i = 0; i < overview.length - 1; i++) {
    const [x1, y1] = overview[i];
    const [x2, y2] = overview[i + 1];
    for (let x = x1; x < x2; x += 3) {
        const y = Math.round(y1 + (y2 - y1) * (x - x1) / (x2 - x1) + (x * 7 % 5) / 4);
        area += `V${y}H${x + 3}`;
    }
}
document.getElementById('minimap').innerHTML =
    `<path d="M72 910h970v17H72z" fill="#bdbdbd"/><path d="${area}V927z" fill="#505050"/>` +
    '<path d="M1024 911h4v13h-4zM1036 911h4v13h-4z" fill="#000"/><path d="M1025 912h2v11h-2zM1037 912h2v11h-2z" fill="#fff"/>';

// Drawing tool icons
const R = 'stroke="#c81414" fill="none"';
const B = 'stroke="#1818a8" fill="none"';
const W = 'stroke="#fff" fill="none"';
const letters = (value) => `<text x="0" y="8" font-size="9" font-weight="bold" fill="#c81414">${value}</text>`;
const hatch = `<path d="M3 14l2-6M6 13l2-7M9 12l2-8M12 11l2-9" ${R}/><path d="M2 13l12-6M5 9l9-6" ${B}/>`;
const tools = [
    ['새로고침', '<path d="M16 0v16H0z" fill="#aaa"/><path d="M8 2q-5 0-4 6M1 6l3 3 3-3M8 14q5 0 5-6M10 9l3-3 3 3" stroke="#1010a0" stroke-width="2" fill="none"/>'],
    ['연결', `<path d="M2 1h3v14H2zM11 1h3v14h-3zM1 4h5v3H1zM10 4h5v3h-5zM1 10h5v3H1zM10 10h5v3h-5z" ${B}/><path d="M5 5h6M5 11h6M8 3v10" ${R}/>`],
    ['선택', '<path d="M4 1l10 9-5 1 3 4-2 1-3-5-3 3z" fill="#1010a0"/>', 'active'],
    ['지우기', `<path d="M2 14L14 2M2 7V3h4M10 13h4M3 6h3M10 10h3" ${W}/>`, 'off'],
    ['선 지우기', `<path d="M2 3h9M3 7q6-5 9 0t-5 6-3-2l6-3M1 14h8" ${W}/>`, 'off'],
    ['모두 지우기', `<path d="M2 2v5h3V3M7 3h5M5 9q5-4 8-1t-4 6-4-2l6-3M1 14h6" ${W}/>`, 'off'],
    ['지그재그', `<path d="M2 1v13h13M3 9l3-4 2 3" ${B}/><path d="M8 2v12l3-3 4-5" ${R}/>`],
    ['수평선', `<path d="M3 8h10" ${B}/><path d="M1 6h4v4H1zM11 6h4v4h-4z" fill="#c81414"/>`],
    ['수직선', `<path d="M8 3v10" ${B}/><path d="M6 1h4v3H6zM6 12h4v3H6z" fill="#c81414"/>`],
    ['기간', `<path d="M4 4v10h9V9" ${B}/><path d="M3 7h3v4H3z" fill="#1818a8"/><path d="M12 2v7" ${R}/><path d="M11 2h3v3h-3z" fill="#c81414"/>`],
    ['추세선', `<path d="M3 13L13 3" ${B}/><path d="M1 11h4v4H1zM11 1h4v4h-4z" fill="#c81414"/>`],
    ['각도선', `<path d="M3 14L13 2" ${B}/><text x="0" y="8" font-size="10" font-weight="bold" fill="#c81414">A</text><text x="9" y="15" font-size="10" font-weight="bold" fill="#c81414">T</text>`],
    ['되돌림', `<path d="M1 2.500h13M3 5.500h11M4 8.500h10" ${R}/><path d="M5 10.500h9M3 13.500h12" ${B}/>`],
    ['피보나치 시간', `${letters('f/L')}<path d="M2 9v6M5 9v6M9 9v6M13 9v6" ${B}/>`],
    ['피보나치 팬', `${letters('f/f')}<path d="M1 14l13-5M1 14h12M3 12l7-3" ${B}/>`],
    ['피보나치 원', `${letters('f/o')}<path d="M1 15l7-6 7 6M3 12q5-4 10 0" ${B}/>`],
    ['피보나치 되돌림', `${letters('f/R')}<path d="M1 10.500h14M1 13.500h14" ${B}/>`],
    ['평행선', `<path d="M1 9l8-8M3 13L14 2M8 14l7-7" ${B}/>`],
    ['엘리어트 5', `${letters('E')}<path d="M2 14l4-4 3 2 5-6" ${R}/><path d="M6 10l3 2 5-5" ${B}/>`],
    ['엘리어트 3', `${letters('E')}<path d="M2 14l4-4 3 3 5-6" ${B}/><path d="M5 9h2v2H5zM8 12h2v2H8zM13 6h2v2h-2z" fill="#c81414"/>`],
    ['회귀선', `${letters('L')}<path d="M4 15V9M7 13V8M10 13V5M14 11V2" ${R}/><path d="M3 13l12-7" ${B}/>`],
    ['채널 D', letters('D') + hatch],
    ['채널 E', letters('E') + hatch],
    ['채널 R', letters('R') + hatch],
    ['사분위', `<path d="M1 2.500h14M1 14.500h14M10 8.500h5" ${B}/><text x="1" y="12" font-size="10" font-weight="bold" fill="#c81414">Q</text>`],
    ['문자', '<path d="M2 2h12v4h-1l-1-2H9v9h2v1H5v-1h2V4H4L3 6H2z" fill="#2828c0"/>'],
    ['위 화살표', '<path d="M8 1l7 7h-4v6H5V8H1z" fill="#2828c8"/>'],
    ['아래 화살표', '<path d="M8 15l7-7h-4V2H5v6H1z" fill="#2828c8"/>'],
    ['사각형', `<path d="M2 2h12v12H2z" ${B}/><path d="M4 4h8v8H4z" fill="#ef4848"/>`],
    ['원', `<circle cx="8" cy="8" r="6" ${B}/><circle cx="8" cy="8" r="4" fill="#ef4848"/>`],
    ['얼굴', `<circle cx="8" cy="8" r="6" ${B}/><path d="M5 6.500h1M10 6.500h1M5 9q3 4 6 0" ${B}/>`],
    ['번호', `<circle cx="8" cy="8" r="6" ${B}/><path d="M7 5h1v6" ${B}/>`]
];
document.getElementById('draw-tools').innerHTML = tools.map(([label, icon, state]) =>
    `<button class="${state || ''}" aria-label="${label}"><svg width="16" height="16" viewBox="0 0 16 16">${icon}</svg></button>`).join('');
```
